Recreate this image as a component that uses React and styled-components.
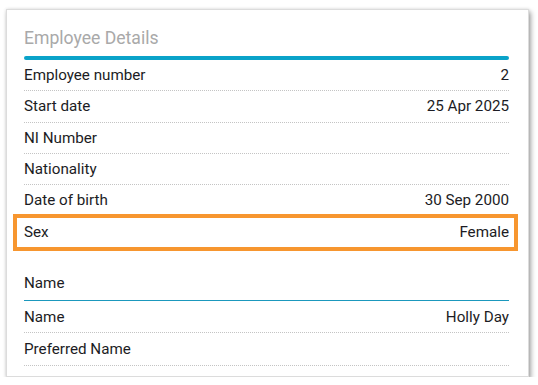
import styled, { createGlobalStyle } from "styled-components";

const GlobalStyle = createGlobalStyle`
  html, body {
    margin: 0;
    background: #ffffff;
  }
  body {
    font-family: Roboto, "Liberation Sans", sans-serif;
    color: #1c1c24;
  }
`;

const Page = styled.div`
  padding: 9px 0 0 6px;
`;

const Card = styled.div`
  box-sizing: border-box;
  width: 523px;
  height: 368px;
  background: #fff;
  border: 1px solid #dcdcdc;
  box-shadow: 2px 3px 5px rgba(0, 0, 0, 0.35), 0 0 3px rgba(0, 0, 0, 0.12);
  padding: 0 19px 0 17px;
`;

const Title = styled.h2`
  margin: 0;
  padding-top: 16px;
  height: 30px;
  font-size: 17.6px;
  font-weight: 400;
  line-height: 24px;
  color: #a9a9a9;
`;

const Bar = styled.div`
  height: 4px;
  border-radius: 2px;
  background: #0aa3c9;
`;

const Row = styled.div`
  position: relative;
  box-sizing: border-box;
  height: ${(p) => p.h || 31.3}px;
  display: flex;
  align-items: center;
  justify-content: space-between;
  font-size: 15.2px;
  border-bottom: 1px dotted #c4c4c4;

  ${(p) =>
    p.highlight &&
    `
    &::after {
      content: "";
      position: absolute;
      top: -2px;
      bottom: -4px;
      left: -11px;
      right: -9px;
      border: 4px solid #f7962f;
      pointer-events: none;
    }
  `}
`;

const Label = styled.span``;

const Value = styled.span`
  text-align: right;
`;

const SectionHead = styled.div`
  margin-top: 18px;
  height: 34px;
  display: flex;
  align-items: center;
  font-size: 15.2px;
  border-bottom: 1px solid #1b98bd;
`;

const details = [
  ["Employee number", "2"],
  ["Start date", "25 Apr 2025"],
  ["NI Number", ""],
  ["Nationality", ""],
  ["Date of birth", "30 Sep 2000"],
  ["Sex", "Female", true],
];

const names = [
  ["Name", "Holly Day"],
  ["Preferred Name", ""],
];

const App = () => {
  return (
    <>
      <GlobalStyle />
      <Page>
        <Card>
          <Title>Employee Details</Title>
          <Bar />
          {details.map(([label, value, hl]) => (
            <Row key={label} highlight={hl}>
              <Label>{label}</Label>
              <Value>{value}</Value>
            </Row>
          ))}
          <SectionHead>Name</SectionHead>
          {names.map(([label, value]) => (
            <Row key={label} h={32.5}>
              <Label>{label}</Label>
              <Value>{value}</Value>
            </Row>
          ))}
        </Card>
      </Page>
    </>
  );
};

export default App;
